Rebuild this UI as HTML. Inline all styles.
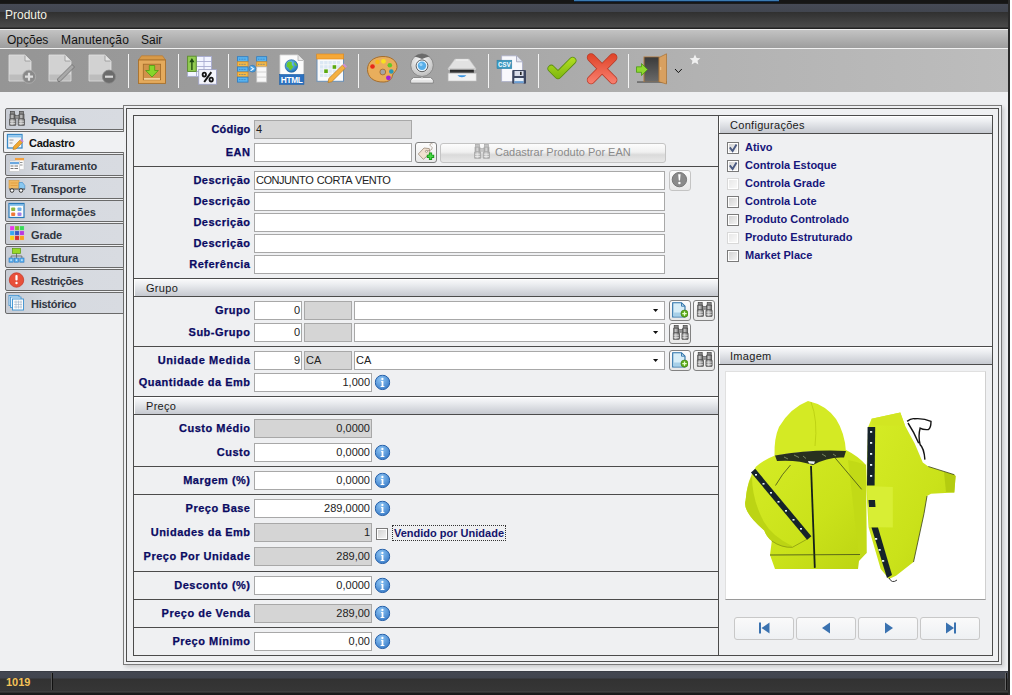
<!DOCTYPE html>
<html><head><meta charset="utf-8">
<style>
*{box-sizing:border-box;margin:0;padding:0}
html,body{width:1012px;height:695px;overflow:hidden;background:#ffffff;font-family:"Liberation Sans",sans-serif;font-size:11px;}
.a{position:absolute}
#win{position:absolute;left:0;top:0;width:1010px;height:695px;background:#eff0f2;overflow:hidden}
#tb0{left:0;top:0;width:1010px;height:3px;background:#161616}
#title{left:0;top:3px;width:1008px;height:26px;background:linear-gradient(#1c1c1c 0,#1c1c1c 1px,#464a56 1px,#42464f 9px,#303030 9px,#4a4a4a 24px,#222 25px)}
#title span{position:absolute;left:5px;top:5px;font-size:12px;color:#f2f2e6}
#menu{left:0;top:29px;width:1008px;height:20px;border-top:1px solid #ececec;border-bottom:1px solid #f0f0f0;background:linear-gradient(#c3c3c3,#9d9d9d)}
#menu span{position:absolute;top:3px;font-size:12px;color:#111}
#toolbar{left:0;top:49px;width:1008px;height:43px;background:linear-gradient(90deg,#959595 0,#9c9c9c 22%,#a4a4a4 44%,#b2b2b2 69%,#bbbbbb 95%,#bdbdbd 100%)}
.sep{position:absolute;top:5px;width:1px;height:34px;background:#f4f4f4}
#rb{left:1008px;top:0;width:2px;height:695px;background:#2a2a2a}
#status{left:0;top:671px;width:1008px;height:24px;background:linear-gradient(#30333a 0,#434751 1px,#41454f 7px,#323232 8px,#363636 20px,#474747 21px,#1c1c1c 22px,#1a1a1a 24px)}
#status span{position:absolute;left:6px;top:5px;font-weight:bold;color:#f4c258;font-size:11px}
.frame{border:1px solid #777}
.lbl{position:absolute;font-weight:bold;color:#0a0a62;letter-spacing:0.5px;-webkit-text-stroke:0.25px #0a0a62;text-align:right;white-space:nowrap}
.inp{position:absolute;background:#fff;border:1px solid #a8a8a8;height:19px;font-size:11px;color:#222;line-height:17px;padding:0 1px;white-space:nowrap}
.dis{background:#d5d5d5}
.r{text-align:right}
.hline{position:absolute;height:1px;background:#4b4b4b}
.shdr{position:absolute;height:19px;border-top:1px solid #4b4b4b;border-bottom:1px solid #4b4b4b;background:linear-gradient(#fafafb,#eceef1 30%,#c6c9d0);box-shadow:inset 1px 1px 0 #fff;font-size:11px;color:#1a1a1a;padding-left:12px;line-height:18px;letter-spacing:0.3px}
.tab{position:absolute;left:5px;width:119px;height:22px;border:1px solid #6a6a6a;border-radius:2px 1px 1px 2px;background:linear-gradient(90deg,#c8ccd4,#d6dae0 35%,#d8dbe1);font-weight:bold;color:#303540;font-size:11px;line-height:22px;padding-left:25px;letter-spacing:0.12px}
.tab.sel{left:3px;width:121px;border-right:none;background:#f0f1f3;color:#111;padding-left:25px}
.chk{position:absolute;left:727px;width:12px;height:12px;border:1px solid #7a7a7a;box-shadow:inset 0 0 0 1px #fff;background:linear-gradient(135deg,#d0d0d0,#f6f6f6)}
.chk svg{position:absolute;left:0;top:0}
.chk.f{border-color:#d8d8d8;background:linear-gradient(135deg,#e6e6e6,#fafafa)}
.cl{position:absolute;left:745px;font-weight:bold;color:#16167a;font-size:11px;letter-spacing:0px}
.btn{position:absolute;width:22px;height:21px;border:1px solid #828282;border-radius:3px;background:linear-gradient(#fdfdfd,#e8e8e8)}
.nav{position:absolute;top:617px;width:60px;height:23px;border:1px solid #c8c8c8;border-radius:3px;background:linear-gradient(#fafafa,#eef0f3)}
</style></head><body>
<div id="win">
<div class="a" id="tb0"></div>
<div class="a" style="left:574px;top:0;width:205px;height:1px;background:#3a7ab2"></div><div class="a" style="left:574px;top:1px;width:205px;height:1px;background:#0e2848"></div>
<div class="a" id="title"><span>Produto</span></div>
<div class="a" id="menu"><span style="left:7px">Opções</span><span style="left:61px;letter-spacing:0.2px">Manutenção</span><span style="left:141px">Sair</span></div>
<div class="a" id="toolbar">
  <div class="sep" style="left:128px"></div>
  <div class="sep" style="left:178px"></div>
  <div class="sep" style="left:228px"></div>
  <div class="sep" style="left:358px"></div>
  <div class="sep" style="left:488px"></div>
  <div class="sep" style="left:538px"></div>
  <div class="sep" style="left:628px"></div>
</div>

<svg class="a" style="left:0;top:49px" width="1008" height="43" viewBox="0 49 1008 43">
<defs>
<linearGradient id="gx" gradientUnits="userSpaceOnUse" x1="0" y1="54" x2="0" y2="84"><stop offset="0" stop-color="#e04428"/><stop offset="1" stop-color="#f88070"/></linearGradient>
<linearGradient id="gck" gradientUnits="userSpaceOnUse" x1="0" y1="57" x2="0" y2="80"><stop offset="0" stop-color="#b4e020"/><stop offset="1" stop-color="#7ab410"/></linearGradient>
<linearGradient id="gdoor" x1="0" y1="0" x2="0" y2="1"><stop offset="0" stop-color="#3a3a3a"/><stop offset="1" stop-color="#6a6a6a"/></linearGradient>
<radialGradient id="gglobe" cx="0.4" cy="0.35" r="0.7"><stop offset="0" stop-color="#7ad0ff"/><stop offset="1" stop-color="#1a6ab0"/></radialGradient>
<radialGradient id="gcam" cx="0.45" cy="0.35" r="0.7"><stop offset="0" stop-color="#ffffff"/><stop offset="1" stop-color="#b8b8b8"/></radialGradient>
</defs>
<!-- doc plus -->
<path d="M9 55 H25 L31 61 V81 H9 Z" fill="#d2d2d2" stroke="#e2e2e2" stroke-width="0.8"/>
<rect x="9.4" y="74.5" width="21.2" height="6.1" fill="#bdbdbd"/>
<path d="M25 55.5 V61 H30.5 Z" fill="#e6e6e6"/><path d="M25 55.5 V61 H30.5" fill="none" stroke="#9c9c9c" stroke-width="0.9"/>
<circle cx="29" cy="76.7" r="6.6" fill="#8a8a8a" stroke="#b0b0b0" stroke-width="0.8"/>
<path d="M29 72.7 V80.7 M25 76.7 H33" stroke="#dedede" stroke-width="2.2"/>
<!-- doc edit -->
<path d="M49 55 H65 L71 61 V81 H49 Z" fill="#d2d2d2" stroke="#e2e2e2" stroke-width="0.8"/>
<rect x="49.4" y="74.5" width="21.2" height="6.1" fill="#bdbdbd"/>
<path d="M65 55.5 V61 H70.5 Z" fill="#e6e6e6"/><path d="M65 55.5 V61 H70.5" fill="none" stroke="#9c9c9c" stroke-width="0.9"/>
<path d="M58 81.5 L57.5 79 L72 64.5 L74.5 67 L60 81.5 Z" fill="#a8a8a8" stroke="#6e6e6e" stroke-width="0.8"/>
<!-- doc minus -->
<path d="M89 55 H105 L111 61 V81 H89 Z" fill="#d2d2d2" stroke="#e2e2e2" stroke-width="0.8"/>
<rect x="89.4" y="74.5" width="21.2" height="6.1" fill="#bdbdbd"/>
<path d="M105 55.5 V61 H110.5 Z" fill="#e6e6e6"/><path d="M105 55.5 V61 H110.5" fill="none" stroke="#9c9c9c" stroke-width="0.9"/>
<circle cx="109" cy="76.7" r="6.6" fill="#6c6c6c" stroke="#8a8a8a" stroke-width="0.8"/>
<path d="M105 76.7 H113" stroke="#d8d8d8" stroke-width="2.2"/>
<!-- box -->
<path d="M141.5 55.8 H162.5 L165.5 60 H138.5 Z" fill="#d89a48" stroke="#b87a30" stroke-width="0.7"/>
<rect x="138.5" y="60" width="27" height="23.4" fill="#e4aa5c" stroke="#a8702a" stroke-width="0.9"/>
<rect x="143.3" y="64.2" width="17.3" height="15.6" fill="#d0924a" stroke="#a06a28" stroke-width="0.8"/>
<rect x="144" y="78.2" width="16" height="1.5" fill="#f8e0b0"/>
<path d="M149.3 65.5 H154.7 V70.5 H158.3 L152 77 L145.7 70.5 H149.3 Z" fill="#86d62a" stroke="#4e9a12" stroke-width="0.8"/>
<!-- % table -->
<rect x="196.5" y="56.5" width="15" height="20" fill="#f2f4ff" stroke="#a8acd0" stroke-width="0.9"/>
<path d="M196.5 61.5 H211.5 M196.5 66.5 H211.5 M196.5 71.5 H211.5 M204 56.5 V76.5" stroke="#a8acd0" stroke-width="0.9"/>
<rect x="187.6" y="71.4" width="8.9" height="5" fill="#f2f4ff" stroke="#a8acd0" stroke-width="0.9"/>
<rect x="187.6" y="56.2" width="8.6" height="15.2" fill="#92cc52" stroke="#5a8c2a" stroke-width="0.9"/>
<path d="M191.9 58 L189.3 62.3 H191.2 V70 H192.6 V62.3 H194.5 Z" fill="#1e4a12"/>
<rect x="198.7" y="69.6" width="17.8" height="14.7" fill="#f4f5fc" stroke="#9ea2c4" stroke-width="0.9"/>
<ellipse cx="204.3" cy="74.6" rx="1.7" ry="2" fill="none" stroke="#151515" stroke-width="1.8"/><ellipse cx="211.2" cy="79.6" rx="1.7" ry="2" fill="none" stroke="#151515" stroke-width="1.8"/><path d="M211.3 72.2 L204.2 82" stroke="#151515" stroke-width="2"/>
<!-- transfer -->
<g stroke="#2a7ac0" stroke-width="0.8">
<rect x="237.4" y="56.7" width="10.6" height="5" fill="#5ab4f0"/>
<rect x="237.4" y="61.8" width="10.6" height="5" fill="#f4b848" stroke="#d89028"/>
<rect x="237.4" y="66.9" width="10.6" height="5" fill="#5ab4f0"/>
<rect x="237.4" y="72" width="10.6" height="5" fill="#f4b848" stroke="#d89028"/>
<rect x="237.4" y="77.1" width="10.6" height="5" fill="#5ab4f0"/>
<rect x="256.7" y="56.7" width="10" height="5" fill="#5ab4f0"/>
<rect x="256.7" y="61.8" width="10" height="5" fill="#f4b848" stroke="#d89028"/>
<rect x="256.7" y="66.9" width="10" height="15.2" fill="#f8f8f8" stroke="#c0c0c0"/>
</g>
<path d="M256.7 72 H266.7 M256.7 77.1 H266.7" stroke="#c8c8c8" stroke-width="0.8"/>
<path d="M239 59.2 h7 M239 64.3 h7 M239 69.4 h7 M239 74.5 h7 M239 79.6 h7 M258 59.2 h7 M258 64.3 h7" stroke="#2a6aa8" stroke-width="0.6" stroke-dasharray="1 0.6"/>
<circle cx="252.4" cy="68.7" r="3.4" fill="#4aa0e0" stroke="#2a70b0" stroke-width="0.6"/><path d="M250.6 66.6 L253.6 68.7 L250.6 70.8" fill="none" stroke="#e8f4ff" stroke-width="1.1"/>
<!-- html -->
<path d="M280 55 H298 L303.5 60.5 V84.3 H280 Z" fill="#fbfbfb" stroke="#d8d8d8" stroke-width="0.8"/>
<path d="M298 55.3 V60.5 H303.2" fill="#e8e8e8" stroke="#b0b0b0" stroke-width="0.8"/>
<circle cx="291.4" cy="66" r="6.3" fill="url(#gglobe)" stroke="#1a5a98" stroke-width="0.6"/>
<path d="M287 63 Q289.5 60.5 292 62.5 Q291 65 293.5 66.5 Q292 69 290 70.5 Q288.5 67 286.5 66.5 Z M294 62 Q296.5 63 297 66 Q295.5 66.5 294.5 64.5 Z" fill="#6ac830"/>
<rect x="279.6" y="74.5" width="24.3" height="10" fill="#2a70c0" stroke="#1a5aa0" stroke-width="0.6"/>
<text x="291.7" y="83" font-family="Liberation Sans" font-size="8.3" font-weight="bold" text-anchor="middle" fill="#fff" letter-spacing="-0.3">HTML</text>
<!-- calendar -->
<rect x="317" y="55" width="26.5" height="26.3" fill="#fafafa" stroke="#6a90b8" stroke-width="1"/>
<rect x="316.7" y="54" width="27" height="5" fill="#f5a838" stroke="#e08818" stroke-width="0.6"/>
<g fill="#dce8f4">
<rect x="320" y="61" width="3.4" height="3.4"/><rect x="324.2" y="61" width="3.4" height="3.4"/><rect x="328.4" y="61" width="3.4" height="3.4"/><rect x="332.6" y="61" width="3.4" height="3.4"/><rect x="336.8" y="61" width="3.4" height="3.4"/>
<rect x="320" y="65.2" width="3.4" height="3.4"/><rect x="324.2" y="65.2" width="3.4" height="3.4"/><rect x="328.4" y="65.2" width="3.4" height="3.4"/><rect x="336.8" y="65.2" width="3.4" height="3.4"/>
<rect x="320" y="69.4" width="3.4" height="3.4"/><rect x="328.4" y="69.4" width="3.4" height="3.4"/><rect x="332.6" y="69.4" width="3.4" height="3.4"/>
<rect x="320" y="73.6" width="3.4" height="3.4"/><rect x="324.2" y="73.6" width="3.4" height="3.4"/><rect x="328.4" y="73.6" width="3.4" height="3.4"/>
</g>
<rect x="332.6" y="65.2" width="3.6" height="3.6" fill="#5aaa10"/><rect x="324.2" y="69.4" width="3.6" height="3.6" fill="#5aaa10"/>
<path d="M328 82.5 L328.8 78.5 L342.5 65 L345.5 68 L331.8 81.7 Z" fill="#f5b040" stroke="#b87a20" stroke-width="0.7"/>
<path d="M342.5 65 L344 63.5 L347 66.5 L345.5 68 Z" fill="#d090d0"/>
<!-- palette -->
<path d="M382 56.5 C391 56 397.5 61 397 67.5 C396.8 71 393.5 72.5 392.5 75 C392 78 391 81.5 384 82 C373 82.5 367.5 76.5 367.5 69.5 C367.5 62 373.5 57 382 56.5 Z" fill="#e9ae5c" stroke="#a66e2c" stroke-width="1"/>
<circle cx="382.8" cy="72" r="2.9" fill="#a4a4a4" stroke="#a66e2c" stroke-width="0.9"/>
<circle cx="372.5" cy="66.5" r="2.3" fill="#e82818"/>
<circle cx="377.5" cy="62" r="2.3" fill="#f8b818"/>
<circle cx="383.5" cy="61.3" r="2.4" fill="#f8e020"/>
<circle cx="389.8" cy="65.3" r="2.3" fill="#60c828"/>
<circle cx="391.3" cy="71.5" r="2.3" fill="#2898b8"/>
<circle cx="388.4" cy="77.8" r="2.4" fill="#a020d8"/>
<!-- webcam -->
<path d="M413.5 77.5 H430.5 L433.3 80 V83 H410.7 V80 Z" fill="#f4f4f4" stroke="#7a7a7a" stroke-width="0.8"/>
<path d="M411.5 81 H432.5" stroke="#c8c8c8" stroke-width="0.6"/>
<rect x="421.2" y="73" width="1.6" height="5" fill="#f0f0f0" stroke="#9a9a9a" stroke-width="0.4"/>
<circle cx="422" cy="65.2" r="11.3" fill="url(#gcam)" stroke="#7e7e7e" stroke-width="0.8"/>
<path d="M414.5 56.5 Q418 53.8 422 53.8 Q426 53.8 429.5 56.5 Q426 57.3 422 59 Q418 57.3 414.5 56.5 Z" fill="#6a6a6a"/>
<circle cx="422" cy="65.8" r="5.9" fill="#e8f4fc" stroke="#505050" stroke-width="0.9"/>
<circle cx="422" cy="65.8" r="4.2" fill="#58aee8"/>
<circle cx="421" cy="64.6" r="1.6" fill="#9ad4f8"/>
<!-- scanner -->
<path d="M455 59.1 H469 L476 68.8 H447.9 Z" fill="#e2e2e2" stroke="#c4c4c4" stroke-width="0.6"/>
<path d="M456 60 H468" stroke="#f6f6f6" stroke-width="1"/>
<rect x="448.2" y="68.8" width="27.6" height="1" fill="#d8d8d8"/>
<rect x="450" y="69.7" width="23.8" height="3" fill="#2a2a2a"/>
<rect x="450" y="71.8" width="23.8" height="0.9" fill="#5a5a5a"/>
<rect x="448.1" y="73.2" width="28.1" height="7.8" fill="#f2f2f2" stroke="#c0c0c0" stroke-width="0.6"/>
<path d="M457.4 75.3 H466.4 Q465 77.3 461.9 77.3 Q458.8 77.3 457.4 75.3 Z" fill="#3a94e0"/>
<!-- csv -->
<path d="M501.6 55.8 H516.5 L522.5 61.8 V81.6 H501.6 Z" fill="#f8f8fc" stroke="#a8acc8" stroke-width="0.8"/>
<path d="M516.5 56 V61.8 H522.3" fill="#e4e6f0" stroke="#9a9eb8" stroke-width="0.8"/>
<rect x="497" y="60.2" width="14.8" height="8.5" fill="#3c9ac0" stroke="#2a7aa0" stroke-width="0.5"/>
<text x="504.4" y="67.4" font-family="Liberation Mono" font-size="7.2" font-weight="bold" text-anchor="middle" fill="#f0f8ff">CSV</text>
<rect x="512.2" y="70" width="13.8" height="13.8" rx="1" fill="#3c4660"/>
<rect x="514.5" y="71" width="9" height="5" fill="#d8dce8"/><rect x="520" y="71.8" width="1.6" height="3.2" fill="#222"/>
<rect x="514.3" y="78" width="9.4" height="5.4" fill="#e8f0f8"/><rect x="514.3" y="81.3" width="9.4" height="1.5" fill="#4a88c8"/>
<!-- check -->
<path d="M551.3 68.6 L558 75.3 L572.6 60.7" fill="none" stroke="#5a8c10" stroke-width="7.6" stroke-linecap="round" stroke-linejoin="round"/><path d="M551.3 68.6 L558 75.3 L572.6 60.7" fill="none" stroke="url(#gck)" stroke-width="6" stroke-linecap="round" stroke-linejoin="round"/>
<!-- X -->
<path d="M591 57.5 L613.2 80 M613.2 57.5 L591 80" fill="none" stroke="#b83a28" stroke-width="8.4" stroke-linecap="round"/><path d="M591 57.5 L613.2 80 M613.2 57.5 L591 80" fill="none" stroke="url(#gx)" stroke-width="6.8" stroke-linecap="round"/>
<!-- door -->
<rect x="637" y="81.4" width="30" height="1.3" fill="#5a5a5a"/>
<rect x="643.5" y="56.5" width="16" height="25.5" fill="#b07a40"/>
<rect x="644.5" y="57.3" width="14.2" height="24.5" fill="url(#gdoor)"/>
<path d="M659 57.5 L666.5 53.8 V84 L659 81.8 Z" fill="#d8a060" stroke="#a87030" stroke-width="0.7"/>
<rect x="660.2" y="67" width="1" height="3" fill="#f0c890"/>
<path d="M636.5 66.8 H641.5 V63.5 L647.5 69.5 L641.5 75.6 V72.3 H636.5 Z" fill="#90d830" stroke="#4a9a10" stroke-width="0.8"/>
<!-- chevron -->
<path d="M675 69 L678.4 72.6 L681.8 69" fill="none" stroke="#111" stroke-width="1"/>
<!-- star -->
<path d="M695 54.5 L696.6 58 L700.3 58.3 L697.5 60.8 L698.4 64.5 L695 62.5 L691.6 64.5 L692.5 60.8 L689.7 58.3 L693.4 58 Z" fill="#f0f0f0"/>
</svg>

<!-- outer frames -->
<div class="a" style="left:123px;top:105px;width:879px;height:560px;border:1px solid #7a7a7a;box-shadow:2px 2px 4px rgba(0,0,0,0.16)"></div>
<div class="a" style="left:126px;top:108px;width:873px;height:554px;border:1px solid #4f4f4f"></div>
<div class="a" style="left:133px;top:115px;width:860px;height:541px;border:1px solid #4b4b4b;background:#eff0f2"></div>

<!-- tabs -->
<div class="tab" style="top:108px;letter-spacing:-0.47px">Pesquisa</div>
<div class="tab sel" style="top:131px;letter-spacing:-0.24px">Cadastro</div>
<div class="tab" style="top:154px;letter-spacing:-0.04px">Faturamento</div>
<div class="tab" style="top:177px;letter-spacing:-0.17px">Transporte</div>
<div class="tab" style="top:200px;letter-spacing:-0.05px">Informações</div>
<div class="tab" style="top:223px;letter-spacing:-0.17px">Grade</div>
<div class="tab" style="top:246px;letter-spacing:-0.20px">Estrutura</div>
<div class="tab" style="top:269px;letter-spacing:-0.40px">Restrições</div>
<div class="tab" style="top:292px;letter-spacing:-0.26px">Histórico</div>

<svg class="a" style="left:0;top:105px" width="40" height="210" viewBox="0 105 40 210">
<defs>
<linearGradient id="gbin" x1="0" y1="0" x2="1" y2="0"><stop offset="0" stop-color="#6a6a6a"/><stop offset="0.5" stop-color="#b8b8b8"/><stop offset="1" stop-color="#5a5a5a"/></linearGradient>
</defs>
<!-- binoculars -->
<use href="#bino" x="9" y="111" width="16" height="15"/>
<!-- cadastro -->
<rect x="7.5" y="134.5" width="14.5" height="13.5" fill="#f4f4f4" stroke="#3a8ac8" stroke-width="1.3"/>
<rect x="8.2" y="135.2" width="13.1" height="2.2" fill="#8ac4ee"/>
<path d="M9.5 140 h4 M9.5 143 h3" stroke="#8a8a8a" stroke-width="0.9"/>
<path d="M13 149.5 L13.6 146.5 L20 140 L22.5 142.5 L16 149 Z" fill="#f0a830" stroke="#b87a20" stroke-width="0.6"/>
<path d="M20 140 L21.2 138.8 L23.7 141.3 L22.5 142.5 Z" fill="#c888d8"/>
<!-- faturamento -->
<rect x="15" y="158" width="9" height="11.5" fill="#fcfcfc" stroke="#c8c8c8" stroke-width="0.6"/>
<rect x="15" y="158" width="9" height="2.3" fill="#f0a040"/>
<path d="M20 162.5 h2.5 M20 165 h2.5" stroke="#777" stroke-width="0.8"/>
<rect x="9.5" y="161" width="10" height="10.5" fill="#fcfcfc" stroke="#c0c0c0" stroke-width="0.6"/>
<rect x="10" y="162" width="9" height="2.2" fill="#6aa8e0"/>
<path d="M10.5 166 h3 M14.5 166 h3.5 M10.5 168.5 h3 M14.5 168.5 h3.5" stroke="#666" stroke-width="0.9"/>
<!-- transporte -->
<rect x="9" y="180.5" width="10" height="8" fill="#f0b860" stroke="#d89838" stroke-width="0.6"/>
<path d="M10.5 183 h7 M10.5 185.5 h7" stroke="#d89030" stroke-width="0.6"/>
<path d="M19 182.5 H22.5 L24.8 185.5 V189 H19 Z" fill="#8ac8f0" stroke="#3a88c8" stroke-width="0.6"/>
<rect x="9" y="188.5" width="16" height="1.2" fill="#666"/>
<circle cx="12" cy="190.5" r="1.8" fill="#fff" stroke="#333" stroke-width="1"/>
<circle cx="21" cy="190.5" r="1.8" fill="#fff" stroke="#333" stroke-width="1"/>
<!-- informacoes -->
<rect x="9" y="203.5" width="15" height="14" fill="#fcfcfc" stroke="#2a7ab8" stroke-width="1.2"/>
<rect x="9.5" y="204" width="14" height="1.8" fill="#7ab8e8"/>
<rect x="11.2" y="207.5" width="4" height="3.5" rx="0.8" fill="#90b840"/>
<rect x="17.5" y="207.5" width="4" height="3.5" rx="0.8" fill="#70b0e8"/>
<rect x="11.2" y="212.5" width="4" height="3.5" rx="0.8" fill="#f07838"/>
<rect x="17.5" y="212.5" width="4" height="3.5" rx="0.8" fill="#a080e8"/>
<!-- grade -->
<rect x="10.0" y="226.0" width="4.3" height="4.3" fill="#e838e8" stroke="#fff" stroke-opacity="0.35" stroke-width="0.5"/><rect x="14.9" y="226.0" width="4.3" height="4.3" fill="#78c030" stroke="#fff" stroke-opacity="0.35" stroke-width="0.5"/><rect x="19.8" y="226.0" width="4.3" height="4.3" fill="#38d858" stroke="#fff" stroke-opacity="0.35" stroke-width="0.5"/><rect x="10.0" y="230.9" width="4.3" height="4.3" fill="#38a8f0" stroke="#fff" stroke-opacity="0.35" stroke-width="0.5"/><rect x="14.9" y="230.9" width="4.3" height="4.3" fill="#3858c8" stroke="#fff" stroke-opacity="0.35" stroke-width="0.5"/><rect x="19.8" y="230.9" width="4.3" height="4.3" fill="#b838e0" stroke="#fff" stroke-opacity="0.35" stroke-width="0.5"/><rect x="10.0" y="235.8" width="4.3" height="4.3" fill="#f8d018" stroke="#fff" stroke-opacity="0.35" stroke-width="0.5"/><rect x="14.9" y="235.8" width="4.3" height="4.3" fill="#d83030" stroke="#fff" stroke-opacity="0.35" stroke-width="0.5"/><rect x="19.8" y="235.8" width="4.3" height="4.3" fill="#f8a020" stroke="#fff" stroke-opacity="0.35" stroke-width="0.5"/>
<!-- estrutura -->
<rect x="12.5" y="248.5" width="8" height="5" fill="#98d828" stroke="#5a9a10" stroke-width="0.7"/>
<path d="M16.5 253.5 V256 M11.1 256 H21.9 M11.1 256 V258 M16.5 256 V258 M21.9 256 V258" stroke="#555" stroke-width="0.7"/>
<rect x="9" y="258" width="4.2" height="4.2" fill="#5ab0f0" stroke="#2a78c0" stroke-width="0.6"/>
<rect x="14.4" y="258" width="4.2" height="4.2" fill="#5ab0f0" stroke="#2a78c0" stroke-width="0.6"/>
<rect x="19.8" y="258" width="4.2" height="4.2" fill="#5ab0f0" stroke="#2a78c0" stroke-width="0.6"/>
<rect x="10.4" y="259.4" width="1.4" height="1.4" fill="#e8f6ff"/><rect x="15.8" y="259.4" width="1.4" height="1.4" fill="#e8f6ff"/><rect x="21.2" y="259.4" width="1.4" height="1.4" fill="#e8f6ff"/>
<!-- restricoes -->
<circle cx="16.5" cy="280" r="7.2" fill="#e8503a" stroke="#c83a2a" stroke-width="0.8"/>
<rect x="15.4" y="275" width="2.2" height="5.5" rx="1" fill="#fff"/>
<circle cx="16.5" cy="283" r="1.2" fill="#fff"/>
<!-- historico -->
<rect x="9" y="295.5" width="10" height="10" fill="#e8f4fc" stroke="#3a90d0" stroke-width="0.8"/>
<rect x="10.5" y="297" width="10.5" height="10.5" fill="#e8f4fc" stroke="#3a90d0" stroke-width="0.8"/>
<rect x="12.5" y="299" width="11" height="11" fill="#fcfcfc" stroke="#3a90d0" stroke-width="0.9"/>
<path d="M14 302 h8 M14 304.5 h8 M14 307 h8 M16 300.5 v8 M18.5 300.5 v8 M21 300.5 v8" stroke="#9ab0c8" stroke-width="0.6"/>
</svg>

<!-- vertical divider -->
<div class="a" style="left:718px;top:115px;width:1px;height:541px;background:#4b4b4b"></div>

<!-- left form -->
<div class="lbl" style="left:150px;width:100.5px;top:123px;letter-spacing:0.2px">Código</div>
<div class="inp dis" style="left:254px;top:120px;width:158px">4</div>
<div class="lbl" style="left:150px;width:100.5px;top:146px">EAN</div>
<div class="inp" style="left:254px;top:143px;width:158px"></div>
<div class="btn" style="left:415px;top:142px;width:22px;height:21px"></div>
<div class="a" style="left:440px;top:143px;width:226px;height:20px;border:1px solid #c4c4c4;border-radius:3px;background:linear-gradient(#fcfcfc 0,#f0f0f0 45%,#dadada 60%,#e8e8e8 100%);color:#8a8a8a;font-size:11px;line-height:17px;padding-left:54px">Cadastrar Produto Por EAN</div>
<div class="hline" style="left:134px;top:166px;width:584px"></div>

<div class="lbl" style="left:150px;width:100.5px;top:174px">Descrição</div>
<div class="inp" style="left:254px;top:171px;width:411px"><span style="letter-spacing:-0.46px;word-spacing:1px">CONJUNTO CORTA VENTO</span></div>
<div class="btn" style="left:669px;top:170px;width:22px;height:21px;border-color:#c4c4c4"></div>
<div class="lbl" style="left:150px;width:100.5px;top:195px">Descrição</div>
<div class="inp" style="left:254px;top:192px;width:411px"></div>
<div class="lbl" style="left:150px;width:100.5px;top:216px">Descrição</div>
<div class="inp" style="left:254px;top:213px;width:411px"></div>
<div class="lbl" style="left:150px;width:100.5px;top:237px">Descrição</div>
<div class="inp" style="left:254px;top:234px;width:411px"></div>
<div class="lbl" style="left:150px;width:100.5px;top:258px">Referência</div>
<div class="inp" style="left:254px;top:255px;width:411px"></div>

<div class="shdr" style="left:134px;top:278px;width:584px">Grupo</div>
<div class="lbl" style="left:140px;width:110.5px;top:304px">Grupo</div>
<div class="inp r" style="left:254px;top:301px;width:48px">0</div>
<div class="inp dis" style="left:304px;top:301px;width:48px"></div>
<div class="inp" style="left:354px;top:301px;width:311px"></div>
<div class="btn" style="left:669px;top:300px"></div>
<div class="btn" style="left:693px;top:300px"></div>
<div class="lbl" style="left:140px;width:110.5px;top:326px">Sub-Grupo</div>
<div class="inp r" style="left:254px;top:323px;width:48px">0</div>
<div class="inp dis" style="left:304px;top:323px;width:48px"></div>
<div class="inp" style="left:354px;top:323px;width:311px"></div>
<div class="btn" style="left:669px;top:323px"></div>
<div class="hline" style="left:134px;top:346px;width:584px"></div>
<div class="lbl" style="left:140px;width:110.5px;top:354px;letter-spacing:0.6px">Unidade Medida</div>
<div class="inp r" style="left:254px;top:351px;width:48px">9</div>
<div class="inp dis" style="left:304px;top:351px;width:48px">CA</div>
<div class="inp" style="left:354px;top:351px;width:311px">CA</div>
<div class="btn" style="left:669px;top:350px"></div>
<div class="btn" style="left:693px;top:350px"></div>
<div class="lbl" style="left:136px;width:114.5px;top:376px">Quantidade da Emb</div>
<div class="inp r" style="left:254px;top:373px;width:118px">1,000</div>

<div class="shdr" style="left:134px;top:396px;width:584px">Preço</div>
<div class="lbl" style="left:140px;width:110.5px;top:422px">Custo Médio</div>
<div class="inp dis r" style="left:254px;top:419px;width:118px">0,0000</div>
<div class="lbl" style="left:140px;width:110.5px;top:446px">Custo</div>
<div class="inp r" style="left:254px;top:443px;width:118px">0,0000</div>
<div class="hline" style="left:134px;top:466px;width:584px"></div>
<div class="lbl" style="left:140px;width:110.5px;top:474px">Margem (%)</div>
<div class="inp r" style="left:254px;top:471px;width:118px">0,0000</div>
<div class="hline" style="left:134px;top:494px;width:584px"></div>
<div class="lbl" style="left:140px;width:110.5px;top:502px">Preço Base</div>
<div class="inp r" style="left:254px;top:499px;width:118px">289,0000</div>
<div class="lbl" style="left:140px;width:110.5px;top:526px">Unidades da Emb</div>
<div class="inp dis r" style="left:254px;top:523px;width:118px">1</div>
<div class="a" style="left:376px;top:528px;width:12px;height:12px;border:1px solid #7a7a7a;box-shadow:inset 0 0 0 1px #fff;background:linear-gradient(135deg,#d0d0d0,#f6f6f6)"></div>
<div class="a" style="left:392px;top:525px;width:114px;height:16px;border:1px dotted #333;font-weight:bold;color:#14146b;line-height:14px;padding-left:1px">Vendido por Unidade</div>
<div class="lbl" style="left:136px;width:114.5px;top:550px">Preço Por Unidade</div>
<div class="inp dis r" style="left:254px;top:547px;width:118px">289,00</div>
<div class="hline" style="left:134px;top:571px;width:584px"></div>
<div class="lbl" style="left:140px;width:110.5px;top:579px">Desconto (%)</div>
<div class="inp r" style="left:254px;top:576px;width:118px">0,0000</div>
<div class="hline" style="left:134px;top:599px;width:584px"></div>
<div class="lbl" style="left:140px;width:110.5px;top:607px">Preço de Venda</div>
<div class="inp dis r" style="left:254px;top:604px;width:118px">289,00</div>
<div class="hline" style="left:134px;top:627px;width:584px"></div>
<div class="lbl" style="left:140px;width:110.5px;top:635px">Preço Mínimo</div>
<div class="inp r" style="left:254px;top:632px;width:118px">0,00</div>

<!-- right panel -->
<div class="shdr" style="left:719px;top:115px;width:273px;height:19px;padding-left:11px">Configurações</div>
<div class="chk" style="top:142px"><svg width="10" height="10" viewBox="0 0 10 10"><path d="M1.8 4.4 L4.6 8 L8.5 1.6" fill="none" stroke="#4a5a82" stroke-width="1.9"/></svg></div><div class="cl" style="top:141px">Ativo</div>
<div class="chk" style="top:160px"><svg width="10" height="10" viewBox="0 0 10 10"><path d="M1.8 4.4 L4.6 8 L8.5 1.6" fill="none" stroke="#4a5a82" stroke-width="1.9"/></svg></div><div class="cl" style="top:159px">Controla Estoque</div>
<div class="chk f" style="top:178px"></div><div class="cl" style="top:177px">Controla Grade</div>
<div class="chk" style="top:196px"></div><div class="cl" style="top:195px">Controla Lote</div>
<div class="chk" style="top:214px"></div><div class="cl" style="top:213px">Produto Controlado</div>
<div class="chk f" style="top:232px"></div><div class="cl" style="top:231px">Produto Estruturado</div>
<div class="chk" style="top:250px"></div><div class="cl" style="top:249px">Market Place</div>

<div class="shdr" style="left:719px;top:346px;width:273px;height:19px;padding-left:11px">Imagem</div>
<div class="a" style="left:725px;top:371px;width:261px;height:229px;background:#fff;border:1px solid #e0e0e0;border-bottom-color:#9a9a9a;border-right-color:#d0d0d0"></div>

<svg class="a" style="left:726px;top:372px" width="259" height="227" viewBox="726 372 259 227">
<defs>
<linearGradient id="glime" x1="0" y1="0" x2="1" y2="1"><stop offset="0" stop-color="#d6ec26"/><stop offset="0.6" stop-color="#cae21a"/><stop offset="1" stop-color="#bcd412"/></linearGradient>
</defs>
<!-- jacket -->
<path d="M755.9 466.8 Q765 459 775 455.5 L846 450 Q858 456 866 465 L866.5 553 L859 561 L858 569 L775 569 L770 555 L771.8 541 Q766 536 764.3 530.4 Q752 520 747.5 511.7 Q744 505 745.6 500.5 Q747 480 755.9 466.8 Z" fill="url(#glime)"/>
<path d="M747.5 511.7 Q744 505 745.6 500.5 Q747 484 752 476 Q752 500 764 522 Q772 536 792 546 L792.4 547.3 Q780 548 771.8 541 Q766 536 764.3 530.4 Q752 520 747.5 511.7 Z" fill="#bcd414"/>
<path d="M848 460 Q858 462 866 465 L866.5 553 L859 558 Q855 520 848 460 Z" fill="#c2da16"/>
<path d="M771.8 541 Q782 548 792.4 547.3 L809.2 538" fill="none" stroke="#8a9a10" stroke-width="0.8"/>
<path d="M774.5 456 Q774 438 779 427 Q790 408 808 401 Q826 405 836 419 Q845 433 846 452 Q812 449 774.5 456 Z" fill="#d4ea24"/>
<path d="M811 402 Q818 420 815 446" fill="none" stroke="#bcd012" stroke-width="0.9"/>
<path d="M775 455.5 Q812 449 846 451 L844 457.5 Q828 456.5 813 465 Q797 459.5 777 461 Z" fill="#28301f"/>
<path d="M784 457 l4 2 M794 455 l5 2.5 M822 454 l4 2.5 M833 454 l3 2 M803 456 l3 2.5" stroke="#8a9a70" stroke-width="0.8"/><path d="M808 461 L815 461.5 L814 464 L809 463.5 Z" fill="#e8f0f0"/>
<path d="M811 466 L814.8 567.9" stroke="#15201a" stroke-width="1.8"/>
<path d="M790.5 465 Q782 474 775.5 485.5 M834 456.6 L861.7 489.4 M770 555 L860 554.5" fill="none" stroke="#2e3818" stroke-width="0.7"/>
<path d="M755.25 468.8 L811.35 536.2 L807.05 539.8 L750.95 472.4 Z" fill="#16232a"/>
<g fill="#e8f4f4"><rect x="755" y="474" width="2" height="1.6"/><rect x="762.5" y="483" width="2" height="1.6"/><rect x="770" y="492" width="2" height="1.6"/><rect x="777.5" y="501" width="2" height="1.6"/><rect x="785" y="510" width="2" height="1.6"/><rect x="792.5" y="519" width="2" height="1.6"/><rect x="800" y="528" width="2" height="1.6"/></g>
<!-- pants -->
<path d="M871.6 418.7 L900.3 412.5 L905 425.5 Q910 435 914.6 443.3 L922.8 462.4 L928.3 466.5 L954.3 474.7 L955.6 476 L954.3 492.4 L931 493.8 L927 496 L924 513.6 L913.5 562 L896 575.8 L889 579 L880.7 569 L868.6 527.4 L866.1 485.6 L868.2 426.9 Z" fill="url(#glime)"/>
<path d="M871.6 418.7 L900.3 412.5 L905 425.5 L872.3 425.5 Z" fill="#d2e622"/>
<path d="M944 472 L954.3 474.7 L955.6 476 L954.3 492.4 L946 492 Z" fill="#b4cc10"/>
<path d="M867 486 L892.8 487 L892.8 527.4 L869 527 Z" fill="#d8ee34"/>
<path d="M928.3 466.5 L954.3 474.7 M927 496 L924 513.6 L913.5 562" fill="none" stroke="#384018" stroke-width="0.8"/>
<path d="M867.6 426.9 L875.2 426.9 L874.6 485.6 L867 485.6 Z" fill="#16232a"/>
<path d="M868.5 500 L875 500 L875.5 507 L869 507 Z" fill="#16232a"/>
<path d="M871.5 527.4 L878 527.4 L892 575 L887 578 Z" fill="#16232a"/>
<g fill="#e8f4f4"><rect x="870" y="431" width="2.2" height="1.8"/><rect x="870" y="442" width="2.2" height="1.8"/><rect x="870" y="453" width="2.2" height="1.8"/><rect x="870" y="464" width="2.2" height="1.8"/><rect x="870" y="475" width="2.2" height="1.8"/><rect x="875" y="538" width="2.2" height="1.8"/><rect x="878.5" y="549" width="2.2" height="1.8"/><rect x="882" y="560" width="2.2" height="1.8"/></g>
<path d="M907.1 421.4 Q911 418 914.6 418.7 Q924 418 931 421.4 Q931 428 928.3 429.6 Q923 430 920.1 428.2 Q918 436 920.1 444.6 Q924 448 924.9 459.6 M908 423 Q914 432 918.7 443.3" fill="none" stroke="#141414" stroke-width="1.4"/>
<path d="M889 578 Q892 584 897 580" fill="none" stroke="#222" stroke-width="0.9"/>
</svg>

<div class="nav" style="left:734px"></div>
<div class="nav" style="left:796px"></div>
<div class="nav" style="left:858px"></div>
<div class="nav" style="left:920px"></div>

<svg class="a" style="left:0;top:0;pointer-events:none" width="1012" height="695" viewBox="0 0 1012 695">
<defs>
<linearGradient id="gbin2" x1="0" y1="0" x2="1" y2="0"><stop offset="0" stop-color="#6a6a6a"/><stop offset="0.4" stop-color="#c8c8c8"/><stop offset="1" stop-color="#5a5a5a"/></linearGradient>
<linearGradient id="gbin3" x1="0" y1="0" x2="1" y2="0"><stop offset="0" stop-color="#a0a0a0"/><stop offset="0.45" stop-color="#d8d8d8"/><stop offset="1" stop-color="#989898"/></linearGradient>
<radialGradient id="ginfo" cx="0.4" cy="0.3" r="0.75"><stop offset="0" stop-color="#8cc4f4"/><stop offset="1" stop-color="#3a7cc8"/></radialGradient>
<symbol id="bino" viewBox="0 0 16 15">
<rect x="1.5" y="0.4" width="4" height="2.8" fill="#8a8a8a" stroke="#4a4a4a" stroke-width="0.7"/><rect x="10.5" y="0.4" width="4" height="2.8" fill="#8a8a8a" stroke="#4a4a4a" stroke-width="0.7"/>
<rect x="1" y="3.2" width="5" height="4.6" fill="url(#gbin2)" stroke="#4a4a4a" stroke-width="0.7"/><rect x="10" y="3.2" width="5" height="4.6" fill="url(#gbin2)" stroke="#4a4a4a" stroke-width="0.7"/>
<rect x="6" y="4.6" width="4" height="2.6" fill="#9a9a9a" stroke="#4a4a4a" stroke-width="0.6"/>
<rect x="0.4" y="7.8" width="6.4" height="6.8" rx="1" fill="url(#gbin2)" stroke="#4a4a4a" stroke-width="0.7"/><rect x="9.2" y="7.8" width="6.4" height="6.8" rx="1" fill="url(#gbin2)" stroke="#4a4a4a" stroke-width="0.7"/>
<path d="M1 10.2 h5.2 M9.8 10.2 h5.2 M1 12.4 h5.2 M9.8 12.4 h5.2" stroke="#e4e4e4" stroke-width="0.8"/>
</symbol>
<symbol id="binof" viewBox="0 0 16 15">
<rect x="1.5" y="0.4" width="4" height="2.8" fill="#c4c4c4" stroke="#a8a8a8" stroke-width="0.7"/><rect x="10.5" y="0.4" width="4" height="2.8" fill="#c4c4c4" stroke="#a8a8a8" stroke-width="0.7"/>
<rect x="1" y="3.2" width="5" height="4.6" fill="url(#gbin3)" stroke="#a8a8a8" stroke-width="0.7"/><rect x="10" y="3.2" width="5" height="4.6" fill="url(#gbin3)" stroke="#a8a8a8" stroke-width="0.7"/>
<rect x="6" y="4.6" width="4" height="2.6" fill="#c8c8c8" stroke="#a8a8a8" stroke-width="0.6"/>
<rect x="0.4" y="7.8" width="6.4" height="6.8" rx="1" fill="url(#gbin3)" stroke="#a8a8a8" stroke-width="0.7"/><rect x="9.2" y="7.8" width="6.4" height="6.8" rx="1" fill="url(#gbin3)" stroke="#a8a8a8" stroke-width="0.7"/>
<path d="M1 10.2 h5.2 M9.8 10.2 h5.2 M1 12.4 h5.2 M9.8 12.4 h5.2" stroke="#f2f2f2" stroke-width="0.8"/>
</symbol>
<symbol id="docp" viewBox="0 0 16 16">
<path d="M0.7 0.7 H9.5 L13 4.2 V15 H0.7 Z" fill="#d8eef8" stroke="#2a70a8" stroke-width="1.1"/>
<path d="M9.5 1 V4.2 H12.7" fill="none" stroke="#2a70a8" stroke-width="0.9"/>
<rect x="1.3" y="10.5" width="11" height="3.8" fill="#a8d0e8"/>
<circle cx="12.5" cy="11.6" r="3.6" fill="#5aaa18" stroke="#3a7a10" stroke-width="0.6"/>
<path d="M12.5 9.4 V13.8 M10.3 11.6 H14.7" stroke="#e8ffd0" stroke-width="1.3"/>
</symbol>
<symbol id="info" viewBox="0 0 16 16">
<circle cx="8" cy="8" r="7.2" fill="url(#ginfo)" stroke="#2660a8" stroke-width="1"/>
<circle cx="7.9" cy="4.6" r="1.15" fill="#fff"/>
<path d="M6.6 6.6 H8.9 V11.6 H9.9 V12.6 H6.1 V11.6 H7.1 V7.5 H6.6 Z" fill="#fff"/>
</symbol>
</defs>
<!-- EAN tag button -->
<path d="M418.3 154 L424 148 L429.3 148.6 L430 153.6 L423.3 159.3 Z" fill="#f0e0d0" stroke="#9a8a78" stroke-width="0.8" stroke-linejoin="round"/>
<circle cx="426.4" cy="151.4" r="1" fill="#fff" stroke="#8a7a68" stroke-width="0.7"/>
<path d="M427 150.8 Q430.5 151 431.8 149.3 Q433 147.5 431 146.3 Q429.3 145.3 430.2 144 Q431.2 143 432.6 144" fill="none" stroke="#9a8a78" stroke-width="0.7"/>
<path d="M430.5 152.6 V160 M426.8 156.3 H434.2" stroke="#1a9a1a" stroke-width="3.2"/>
<path d="M430.5 153.6 V159 M427.8 156.3 H433.2" stroke="#44d844" stroke-width="1.6"/>
<!-- cadastrar binoculars faded -->
<use href="#binof" x="474" y="144" width="16" height="15"/>
<!-- exclamation -->
<circle cx="679.4" cy="179.6" r="7.2" fill="#8a8a8a" stroke="#6e6e6e" stroke-width="0.9"/>
<path d="M678.2 174.2 H680.6 L680 180.5 H678.8 Z" fill="#fff"/>
<circle cx="679.4" cy="183" r="1.2" fill="#fff"/>
<!-- grupo buttons -->
<use href="#docp" x="672" y="302" width="16" height="16"/>
<use href="#bino" x="696.7" y="302" width="16" height="15"/>
<use href="#bino" x="672.7" y="325" width="16" height="15"/>
<use href="#docp" x="672" y="352" width="16" height="16"/>
<use href="#bino" x="696.7" y="352" width="16" height="15"/>
<!-- combo arrows -->
<path d="M653 309 H658.2 L655.6 312 Z M653 331 H658.2 L655.6 334 Z M653 359 H658.2 L655.6 362 Z" fill="#111"/>
<!-- info icons -->
<use href="#info" x="374.5" y="374.4" width="16" height="16"/>
<use href="#info" x="374.5" y="444.4" width="16" height="16"/>
<use href="#info" x="374.5" y="472.4" width="16" height="16"/>
<use href="#info" x="374.5" y="500.4" width="16" height="16"/>
<use href="#info" x="374.5" y="548.4" width="16" height="16"/>
<use href="#info" x="374.5" y="577.4" width="16" height="16"/>
<use href="#info" x="374.5" y="605.4" width="16" height="16"/>
<use href="#info" x="374.5" y="633.4" width="16" height="16"/>
<!-- nav arrows -->
<g fill="#3a72b0">
<rect x="759" y="622.5" width="2" height="11"/><path d="M769.5 622.5 V633.5 L761.5 628 Z"/>
<path d="M830 622.5 V633.5 L822 628 Z"/>
<path d="M885 622.5 V633.5 L893 628 Z"/>
<path d="M946 622.5 V633.5 L954 628 Z"/><rect x="954" y="622.5" width="2" height="11"/>
</g>
</svg>

<div class="a" id="status"><span>1019</span><div class="a" style="left:51px;top:2px;width:1px;height:17px;background:#555"></div><div class="a" style="left:52px;top:2px;width:1px;height:17px;background:#111"></div><div class="a" style="left:1005px;top:2px;width:1px;height:17px;background:#666"></div><div class="a" style="left:1006px;top:2px;width:1px;height:17px;background:#111"></div></div>
</div>
<div class="a" id="rb"></div>
</body></html>
